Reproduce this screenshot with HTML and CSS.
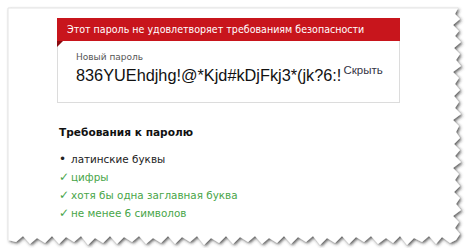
FILE: index.html
```html
<!DOCTYPE html>
<html lang="ru">
<head>
<meta charset="utf-8">
<link rel="stylesheet" href="styles.css">
</head>
<body>
<svg class="paper-bg" width="474" height="248" viewBox="0 0 474 248">
  <defs>
    <filter id="sh" x="-5%" y="-5%" width="110%" height="110%">
      <feDropShadow dx="1.5" dy="1.5" stdDeviation="1.4" flood-color="#333" flood-opacity="0.8"/>
    </filter>
  </defs>
  <polygon filter="url(#sh)" fill="#fff" points="8,8 458,8 455,14 460,19 453,25 459,31 455,36 461,42 454,48 460,54 456,60 461,66 453,72 459,78 455,84 460,90 454,96 459,102 455,108 461,114 453,120 459,126 456,132 460,138 454,144 460,150 455,156 461,162 453,168 459,174 455,180 460,186 454,192 460,198 456,204 461,210 453,216 459,222 455,228 460,234 456,240 450,243 442,237 436,244 429,236 422,242 414,238 407,245 400,236 393,243 386,238 378,244 371,236 364,242 356,237 349,244 342,236 335,243 327,238 320,245 313,236 306,242 298,237 291,244 284,236 277,243 269,238 262,244 255,236 248,242 240,237 233,244 226,236 219,243 211,238 204,245 197,236 190,242 182,237 175,244 168,236 161,243 153,238 146,244 139,236 132,242 124,237 117,244 110,236 103,243 95,238 88,245 81,236 74,242 66,237 59,244 52,236 45,243 37,238 30,244 23,236 16,242 8,240"/>
  <polyline points="8,240 8,8 458,8" fill="none" stroke="#e4e4e4" stroke-width="1"/>
</svg>
<div class="paper">
  <div class="field">
    <div class="banner">Этот пароль не удовлетворяет требованиям безопасности</div>
    <div class="fold"></div>
    <div class="box">
      <div class="label">Новый пароль</div>
      <div class="pw-row">
        <span class="pw">836YUEhdjhg!@*Kjd#kDjFkj3*(jk?6:!</span>
        <span class="hide">Скрыть</span>
      </div>
    </div>
  </div>
  <h3 class="req-title">Требования к паролю</h3>
  <ul class="req">
    <li class="pending"><span class="mark">•</span>латинские буквы</li>
    <li class="ok"><span class="mark">✓</span>цифры</li>
    <li class="ok"><span class="mark">✓</span>хотя бы одна заглавная буква</li>
    <li class="ok"><span class="mark">✓</span>не менее 6 символов</li>
  </ul>
</div>
</body>
</html>
```
FILE: styles.css
```css
html, body {
  margin: 0;
  padding: 0;
  background: #fff;
}
body {
  width: 474px;
  height: 248px;
  overflow: hidden;
  position: relative;
  font-family: "DejaVu Sans", Verdana, sans-serif;
}
.paper-bg {
  position: absolute;
  left: 0;
  top: 0;
  z-index: 0;
}
.paper {
  position: relative;
  z-index: 1;
  padding: 18px 0 0 57px;
}
.field {
  position: relative;
  width: 343px;
}
.banner {
  background: #c8151c;
  color: #fff;
  height: 23px;
  line-height: 23px;
  padding-left: 10px;
  font-family: "DejaVu Sans Condensed", "DejaVu Sans", sans-serif;
  font-size: 10.6px;
  white-space: nowrap;
}
.fold {
  position: absolute;
  left: 0;
  top: 23px;
  width: 0;
  height: 0;
  border-top: 6px solid #8a0b10;
  border-right: 6px solid transparent;
  z-index: 2;
}
.box {
  height: 61px;
  border: 1px solid #dcdcdc;
  border-top: none;
  padding-left: 18px;
  box-sizing: content-box;
}
.label {
  padding-top: 10px;
  font-size: 9px;
  color: #555;
  line-height: 12px;
}
.pw-row {
  display: flex;
  align-items: flex-start;
  margin-top: 0;
}
.pw {
  font-family: "Liberation Sans", Arial, sans-serif;
  font-size: 16.3px;
  color: #111;
  line-height: 24px;
}
.hide {
  font-family: "Liberation Sans", Arial, sans-serif;
  font-size: 11.5px;
  color: #333344;
  margin-left: 2px;
  line-height: 14px;
}
.req-title {
  margin: 21px 0 0 2px;
  font-size: 10.6px;
  font-weight: bold;
  color: #111;
  line-height: 16px;
}
.req {
  list-style: none;
  margin: 10px 0 0 2px;
  padding: 0;
  font-size: 10.4px;
  line-height: 18px;
}
.req li {
  display: flex;
}
.req .mark {
  width: 12px;
  font-size: 12px;
}
.pending {
  color: #222;
}
.ok {
  color: #48a548;
}
```
